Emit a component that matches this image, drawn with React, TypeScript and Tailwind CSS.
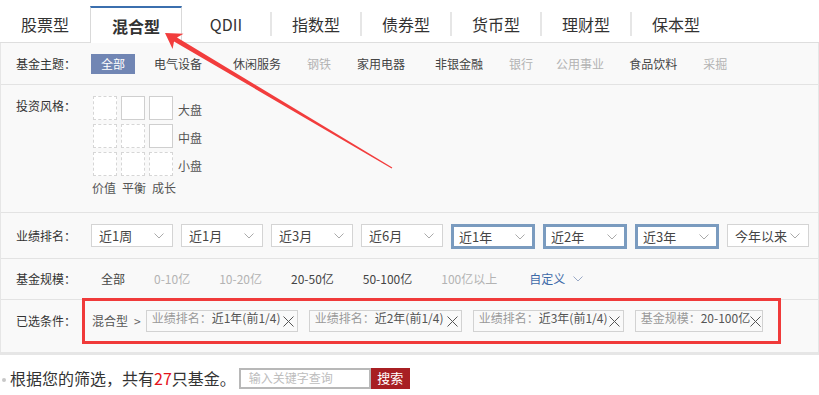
import React from "react";

const F = "font-['Noto_Sans_CJK_SC','Liberation_Sans',sans-serif]";

const tabs = ["股票型", "混合型", "QDII", "指数型", "债券型", "货币型", "理财型", "保本型"];

const themes: { t: string; d?: boolean; m: string }[] = [
  { t: "电气设备", m: "ml-[19px]" },
  { t: "休闲服务", m: "ml-[31px]" },
  { t: "钢铁", d: true, m: "ml-[26px]" },
  { t: "家用电器", m: "ml-[26px]" },
  { t: "非银金融", m: "ml-[30px]" },
  { t: "银行", d: true, m: "ml-[26px]" },
  { t: "公用事业", d: true, m: "ml-[23px]" },
  { t: "食品饮料", m: "ml-[25px]" },
  { t: "采掘", d: true, m: "ml-[26px]" },
];

const selects: { t: string; a?: boolean }[] = [
  { t: "近1周" },
  { t: "近1月" },
  { t: "近3月" },
  { t: "近6月" },
  { t: "近1年", a: true },
  { t: "近2年", a: true },
  { t: "近3年", a: true },
  { t: "今年以来" },
];

const sizes: { t: string; d?: boolean }[] = [
  { t: "全部" },
  { t: "0-10亿", d: true },
  { t: "10-20亿", d: true },
  { t: "20-50亿" },
  { t: "50-100亿" },
  { t: "100亿以上", d: true },
];

const chips: { k: string; v: string; w: string }[] = [
  { k: "业绩排名：", v: "近1年(前1/4)", w: "w-[152px]" },
  { k: "业绩排名：", v: "近2年(前1/4)", w: "w-[153px]" },
  { k: "业绩排名：", v: "近3年(前1/4)", w: "w-[151px]" },
  { k: "基金规模：", v: "20-100亿", w: "w-[128px]" },
];

function Chevron({ color = "#aaa" }: { color?: string }) {
  return (
    <svg width="10" height="6" viewBox="0 0 10 6" fill="none">
      <path d="M0.5 0.5 L5 5 L9.5 0.5" stroke={color} strokeWidth="1" />
    </svg>
  );
}

function Close() {
  return (
    <svg width="11" height="11" viewBox="0 0 11 11" fill="none">
      <path d="M0.5 0.5 L10.5 10.5 M10.5 0.5 L0.5 10.5" stroke="#555" strokeWidth="1" />
    </svg>
  );
}

function Box({ dashed }: { dashed?: boolean }) {
  return (
    <div
      className={
        "w-[24px] h-[24px] bg-white border " +
        (dashed ? "border-dashed border-[#d6d6d6]" : "border-solid border-[#cfcfcf]")
      }
    />
  );
}

export default function App() {
  const grid = [
    [true, false, false],
    [true, true, false],
    [true, true, true],
  ];
  const sizeLabels = ["大盘", "中盘", "小盘"];
  return (
    <div className={"relative w-[819px] h-[395px] bg-white text-[#333] overflow-hidden " + F}>
      {/* Tabs */}
      <div className="flex items-end h-[43px] border-b border-[#dedede]">
        {tabs.map((t, i) =>
          i === 1 ? (
            <div
              key={t}
              className="w-[92px] h-[37px] -mb-px bg-white border-t-2 border-t-[#3b6fae] border-x border-x-[#d9d9d9] flex items-center justify-center text-[16px] leading-[20px] font-bold text-[#333]"
            >
              {t}
            </div>
          ) : (
            <div key={t} className={(i === 2 ? "w-[88px]" : "w-[90px]") + " h-[36px] flex items-center"}>
              {i >= 3 && <div className="w-[2px] h-[24px] bg-[#e6e6e6]" />}
              <div className="flex-1 text-center text-[16px] leading-[20px] text-[#333]">{t}</div>
            </div>
          )
        )}
      </div>

      {/* Panel */}
      <div className="bg-[#f9f9f9] border-x border-[#e6e6e6] border-b-[3px] border-b-[#e6e6e6] text-[12px]">
        {/* Row 1 */}
        <div className="flex items-center h-[42px] border-b border-[#e3e3e3]">
          <div className="w-[90px] pl-[15px] text-[#333]">基金主题：</div>
          <div className="h-[20px] px-[10px] flex items-center bg-[#7186b4] text-white">全部</div>
          <div className="flex items-center">
            {themes.map((x) => (
              <span key={x.t} className={x.m + " " + (x.d ? "text-[#b3b3b3]" : "text-[#444]")}>
                {x.t}
              </span>
            ))}
          </div>
        </div>

        {/* Row 2 */}
        <div className="flex items-start h-[128px] pt-[11px] border-b border-[#e3e3e3]">
          <div className="w-[92px] pl-[15px] leading-[18px] pt-[1px] text-[#333]">投资风格：</div>
          <div className="flex flex-col">
            <div className="flex flex-col gap-[4px]">
              {grid.map((row, r) => (
                <div key={r} className="flex items-center gap-[4px]">
                  {row.map((d, c) => (
                    <Box key={c} dashed={d} />
                  ))}
                  <span className="ml-[1px] text-[#555] leading-[18px] pt-[3px]">{sizeLabels[r]}</span>
                </div>
              ))}
            </div>
            <div className="flex gap-[6px] mt-[3px] -ml-[1px] text-[#555] leading-[18px]">
              <span>价值</span>
              <span>平衡</span>
              <span>成长</span>
            </div>
          </div>
        </div>

        {/* Row 3 */}
        <div className="flex items-start h-[46px] pt-[11px] border-b border-[#e3e3e3]">
          <div className="w-[90px] pl-[15px] h-[23px] flex items-center text-[#333]">业绩排名：</div>
          <div className="flex items-start gap-[8px]">
            {selects.map((s) =>
              s.a ? (
                <div
                  key={s.t}
                  className="w-[84px] h-[25px] bg-white border-[3px] border-[#7a9bbf] flex items-center justify-between pl-[5px] pr-[7px]"
                >
                  <span className="text-[13px] text-[#444]">{s.t}</span>
                  <Chevron />
                </div>
              ) : (
                <div
                  key={s.t}
                  className="w-[82px] h-[23px] bg-white border border-[#d4d4d4] flex items-center justify-between pl-[7px] pr-[8px]"
                >
                  <span className="text-[13px] text-[#444]">{s.t}</span>
                  <Chevron />
                </div>
              )
            )}
          </div>
        </div>

        {/* Row 4 */}
        <div className="flex items-center h-[41px] border-b border-[#e3e3e3]">
          <div className="w-[91px] pl-[15px] text-[#333]">基金规模：</div>
          <div className="flex items-center gap-[11px]">
            {sizes.map((s) => (
              <span key={s.t} className={"px-[9px] " + (s.d ? "text-[#b3b3b3]" : "text-[#444]")}>
                {s.t}
              </span>
            ))}
            <span className="flex items-center gap-[8px] pl-[12px] text-[#3d6aa8]">
              自定义
              <Chevron color="#9aa9c6" />
            </span>
          </div>
        </div>

        {/* Row 5 */}
        <div className="flex items-start h-[52px] pt-[10px]">
          <div className="w-[91px] pl-[15px] h-[22px] flex items-center text-[#333]">已选条件：</div>
          <div className="h-[22px] flex items-center text-[#555] gap-[6px]">
            <span>混合型</span>
            <span className="text-[#666]">&gt;</span>
          </div>
          <div className="flex items-start gap-[11px] ml-[5px]">
            {chips.map((c, i) => (
              <div
                key={i}
                className={c.w + " h-[22px] border border-[#d2d2d2] flex items-start justify-between pl-[5px] pr-[3px]"}
              >
                <span className="leading-[14px] whitespace-nowrap">
                  <span className="text-[#999]">{c.k}</span>
                  <span className="text-[#555]">{c.v}</span>
                </span>
                <span className="mt-[5px]">
                  <Close />
                </span>
              </div>
            ))}
          </div>
        </div>
      </div>

      {/* Result bar */}
      <div className="flex items-center pt-[12px] pl-[2px]">
        <div className="w-[4px] h-[4px] rounded-full bg-[#c8c8c8] mr-[4px] mt-[3px]" />
        <div className="text-[16px] leading-[22px] text-[#333]">
          根据您的筛选，共有<span className="text-[#e4131c]">27</span>只基金。
        </div>
        <div className="ml-[3px] flex items-center">
          <div className="w-[132px] h-[21px] border-2 border-[#b8b8b8] bg-white flex items-center pl-[8px] text-[12px] text-[#bdbdbd]">
            输入关键字查询
          </div>
          <div className="w-[39px] h-[21px] bg-[#a81f23] text-white text-[13px] flex items-center justify-center">
            搜索
          </div>
        </div>
      </div>

      {/* Annotation: red box */}
      <div className="absolute left-[82px] top-[298px] w-[699px] h-[46px] border-[3px] border-[#f03a3a] pointer-events-none" />

      {/* Annotation: red arrow */}
      <svg className="absolute left-0 top-0 pointer-events-none" width="819" height="395">
        <polygon
          points="165,33 183.5,33.8 177,37.5 392.3,167.5 391.7,168.5 174,41.5 172.6,49"
          fill="#f23d3d"
        />
      </svg>
    </div>
  );
}
